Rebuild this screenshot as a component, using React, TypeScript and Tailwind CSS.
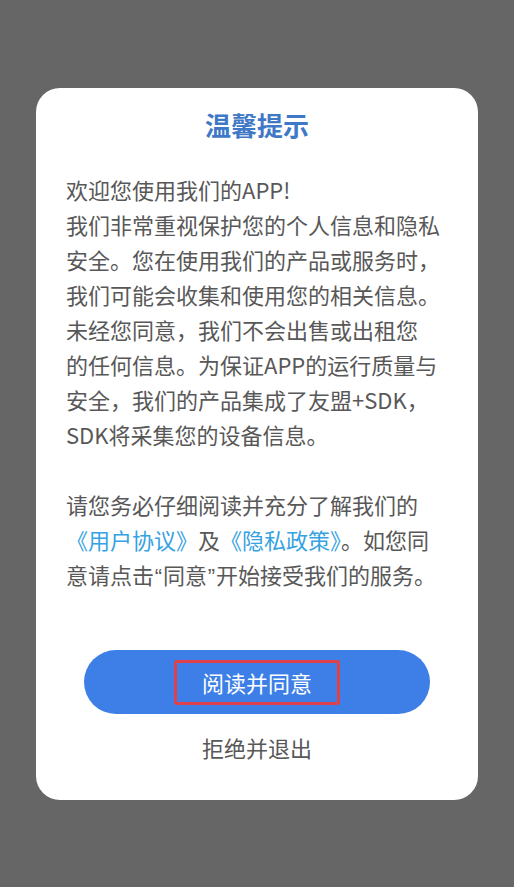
const lines = [
  '欢迎您使用我们的APP!',
  '我们非常重视保护您的个人信息和隐私',
  '安全。您在使用我们的产品或服务时，',
  '我们可能会收集和使用您的相关信息。',
  '未经您同意，我们不会出售或出租您',
  '的任何信息。为保证APP的运行质量与',
  '安全，我们的产品集成了友盟+SDK，',
  'SDK将采集您的设备信息。',
];

// half-width curly quote, as the reference renders it
const Quote = ({ c }: { c: string }) => (
  <span className="inline-block w-[9px] text-center" style={{ fontFamily: '"Liberation Sans", sans-serif' }}>
    {c}
  </span>
);

export default function App() {
  return (
    <div
      className="min-h-[887px] w-full bg-[#666666] pt-[88px] px-[36px]"
      style={{ fontFamily: '"Noto Sans CJK SC", "Noto Sans", sans-serif' }}
    >
      <div className="bg-white rounded-[24px] h-[712px] pt-[20px] flex flex-col">
        <h1 className="text-center text-[26px] leading-[34px] font-bold text-[#3f78c6]">温馨提示</h1>

        <div className="mt-[30px] px-[30px] text-[22px] leading-[35px] text-[#585858]">
          {lines.map((l, i) => (
            <div key={i} className="h-[35px] whitespace-nowrap">{l}</div>
          ))}
          <div className="h-[35px]" />
          <div className="h-[35px] whitespace-nowrap">请您务必仔细阅读并充分了解我们的</div>
          <div className="h-[35px] whitespace-nowrap">
            <span className="text-[#35a2e2]">《用户协议》</span>及<span className="text-[#35a2e2]">《隐私政策》</span>。如您同
          </div>
          <div className="h-[35px] whitespace-nowrap">
            意请点击<Quote c="“" />同意<Quote c="”" />开始接受我们的服务。
          </div>
        </div>

        <button className="mt-[58px] mx-[48px] h-[64px] rounded-full bg-[#3d7fe6] flex items-center justify-center">
          <span className="w-[166px] h-[45px] border-[3px] border-[#e0404a] rounded-[3px] flex items-center justify-center text-white text-[22px]">
            阅读并同意
          </span>
        </button>

        <div className="mt-[16px] text-center text-[22px] leading-[35px] text-[#585858]">拒绝并退出</div>
      </div>
    </div>
  );
}
